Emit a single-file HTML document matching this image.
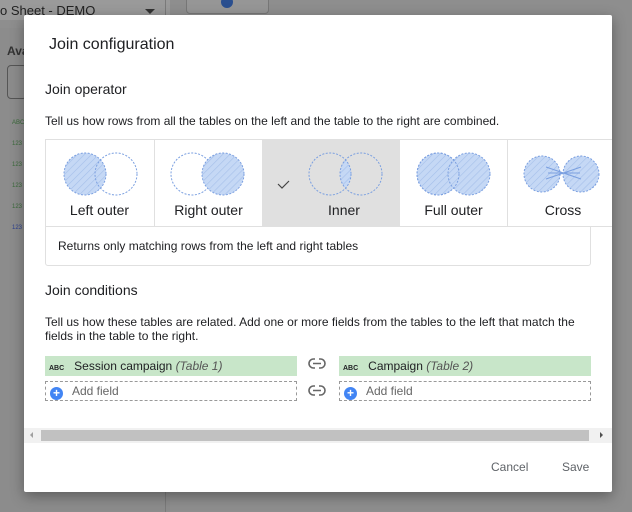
<!DOCTYPE html>
<html><head><style>
*{box-sizing:border-box;margin:0;padding:0}
body{width:632px;height:512px;overflow:hidden;background:#8e8e8e;font-family:"Liberation Sans",Arial,sans-serif;position:relative;color:#202124}
.abs{position:absolute}
.dlg{left:24px;top:15px;width:588px;height:477px;background:#fff;border-radius:2px;box-shadow:0 4px 14px rgba(0,0,0,.35);overflow:hidden}
.card{position:absolute;top:124px;height:87px;border-right:1px solid #e0e0e0;text-align:center;font-size:14px}
.card span{position:absolute;left:0;right:0;top:63px}
.card svg{position:absolute;top:12px;left:0}
.fld{position:absolute;height:20px;font-size:12px;line-height:20px}
.plus{display:inline-block;width:13px;height:13px;border-radius:50%;background:#4285f4;color:#fff;font-size:12px;line-height:13px;text-align:center;margin:0 9px 0 4px;vertical-align:-2px;font-weight:bold}
</style></head><body>
<div class="abs" style="left:0;top:0;width:170px;height:20px;background:#9a9a9a"></div>
<div class="abs" style="left:0;top:3px;font-size:13px;color:#222">o Sheet - DEMO</div>
<div class="abs" style="left:145px;top:9px;border:5px solid transparent;border-top-color:#333;width:0;height:0"></div>
<div class="abs" style="left:0;top:28px;width:170px;height:484px;background:#8c8c8c"></div>
<div class="abs" style="left:165px;top:0;width:1px;height:512px;background:#7a7a7a"></div>
<div class="abs" style="left:7px;top:44px;font-size:12px;font-weight:bold;color:#333">Ava</div>
<div class="abs" style="left:7px;top:65px;width:20px;height:34px;border:1px solid #555;border-radius:4px"></div>
<div class="abs" style="left:186px;top:-4px;width:83px;height:18px;border:1px solid #777;border-radius:4px;background:#969696"></div>
<div class="abs" style="left:221px;top:-4px;width:12px;height:12px;border-radius:50%;background:#2a4f8f"></div>
<div class="abs" style="left:12px;top:113px;font-size:6px;color:#3a6a3a;line-height:21px">ABC<br>123<br>123<br>123<br>123<br><span style="color:#2a3f8f">123</span></div>

<div class="abs dlg">
<div class="abs" style="left:25px;top:21px;font-size:16px">Join configuration</div>
<div class="abs" style="left:21px;top:66px;font-size:14px">Join operator</div>
<div class="abs" style="left:21px;top:99px;font-size:12px">Tell us how rows from all the tables on the left and the table to the right are combined.</div>
<div class="abs" style="left:21px;top:124px;width:580px;height:88px;border:1px solid #e0e0e0;border-right:none"></div>
<svg width="0" height="0" style="position:absolute"><defs><pattern id="h" width="5" height="5" patternUnits="userSpaceOnUse" patternTransform="rotate(45)"><rect width="5" height="5" fill="#c5d8f5"/><line x1="0" y1="0" x2="0" y2="5" stroke="#a5bfea" stroke-width="1.2"/></pattern></defs></svg>
<div class="card" style="left:21px;width:110px"><svg width="110" height="46"><circle cx="40" cy="23" r="21" fill="url(#h)" stroke="#7a9fe0" stroke-dasharray="2,1.5"/><circle cx="71" cy="23" r="21" fill="none" stroke="#7a9fe0" stroke-dasharray="2,1.5"/></svg><span>Left outer</span></div>
<div class="card" style="left:131px;width:108px"><svg width="108" height="46"><circle cx="37" cy="23" r="21" fill="none" stroke="#7a9fe0" stroke-dasharray="2,1.5"/><circle cx="68" cy="23" r="21" fill="url(#h)" stroke="#7a9fe0" stroke-dasharray="2,1.5"/></svg><span>Right outer</span></div>
<div class="card" style="left:239px;width:137px;background:#e0e0e0"><svg width="137" height="46"><path d="M15 33l4 4 7-7" fill="none" stroke="#444" stroke-width="1.2"/><clipPath id="c"><circle cx="67" cy="23" r="21"/></clipPath><circle cx="98" cy="23" r="21" fill="url(#h)" clip-path="url(#c)"/><circle cx="67" cy="23" r="21" fill="none" stroke="#7a9fe0" stroke-dasharray="2,1.5"/><circle cx="98" cy="23" r="21" fill="none" stroke="#7a9fe0" stroke-dasharray="2,1.5"/></svg><span style="padding-left:26px">Inner</span></div>
<div class="card" style="left:376px;width:108px"><svg width="108" height="46"><circle cx="38" cy="23" r="21" fill="url(#h)" stroke="#7a9fe0" stroke-dasharray="2,1.5"/><circle cx="69" cy="23" r="21" fill="url(#h)" stroke="#7a9fe0" stroke-dasharray="2,1.5"/><circle cx="38" cy="23" r="21" fill="none" stroke="#7a9fe0" stroke-dasharray="2,1.5"/></svg><span>Full outer</span></div>
<div class="card" style="left:484px;width:110px;border-right:none"><svg width="110" height="46"><circle cx="34" cy="23" r="18" fill="url(#h)" stroke="#7a9fe0" stroke-dasharray="2,1.5"/><circle cx="73" cy="23" r="18" fill="url(#h)" stroke="#7a9fe0" stroke-dasharray="2,1.5"/><path d="M38 16L73 28M38 28L73 16M40 22H72" stroke="#7a9fe0"/></svg><span>Cross</span></div>
<div class="abs" style="left:21px;top:211px;width:546px;height:40px;border:1px solid #e0e0e0;border-radius:0 0 3px 3px;font-size:12px;line-height:38px;padding-left:12px">Returns only matching rows from the left and right tables</div>
<div class="abs" style="left:21px;top:267px;font-size:14px">Join conditions</div>
<div class="abs" style="left:21px;top:300px;font-size:12px;line-height:14px;width:540px">Tell us how these tables are related. Add one or more fields from the tables to the left that match the fields in the table to the right.</div>
<div class="fld" style="left:21px;top:341px;width:252px;background:#c8e6c9"><b style="font-size:7px;margin:0 10px 0 4px">ABC</b>Session campaign <i style="color:#555">(Table 1)</i></div>
<div class="fld" style="left:315px;top:341px;width:252px;background:#c8e6c9"><b style="font-size:7px;margin:0 10px 0 4px">ABC</b>Campaign <i style="color:#555">(Table 2)</i></div>
<div class="fld" style="left:21px;top:366px;width:252px;border:1px dashed #999;color:#666;line-height:18px"><span class="plus">+</span>Add field</div>
<div class="fld" style="left:315px;top:366px;width:252px;border:1px dashed #999;color:#666;line-height:18px"><span class="plus">+</span>Add field</div>
<svg class="abs" style="left:284px;top:343px" width="18" height="60"><g fill="none" stroke="#666" stroke-width="1.6"><rect x="1" y="1" width="16" height="9" rx="4.5"/><rect x="1" y="28" width="16" height="9" rx="4.5"/></g><g fill="#fff"><rect x="7" y="0" width="4" height="3"/><rect x="7" y="8" width="4" height="3"/><rect x="7" y="27" width="4" height="3"/><rect x="7" y="35" width="4" height="3"/></g><path d="M5 5.5H13M5 32.5H13" stroke="#666" stroke-width="1.6"/></svg>
<div class="abs" style="left:0;top:413px;width:588px;height:15px;background:#f1f1f1"></div>
<div class="abs" style="left:17px;top:415px;width:548px;height:11px;background:#c1c1c1"></div>
<div class="abs" style="left:6px;top:417px;border:3px solid transparent;border-right-color:#a0a0a0;width:0;height:0;border-left-width:0"></div>
<div class="abs" style="left:576px;top:417px;border:3.5px solid transparent;border-left-color:#505050;width:0;height:0;border-right-width:0"></div>
<div class="abs" style="left:467px;top:445px;font-size:12px;color:#5f6368">Cancel</div>
<div class="abs" style="left:538px;top:445px;font-size:12px;color:#5f6368">Save</div>
</div>
</body></html>
